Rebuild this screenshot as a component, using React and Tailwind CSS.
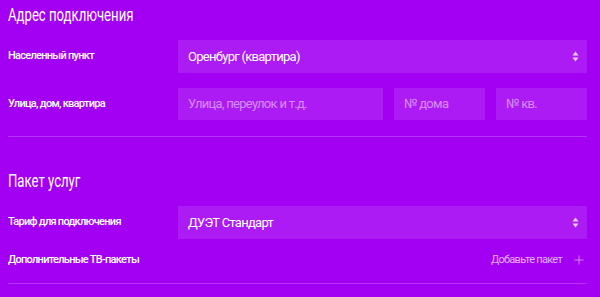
import { Plus } from "lucide-react";

function SelectBox({ value }) {
  return (
    <div className="flex h-[33px] flex-1 items-center justify-between bg-white/10 pl-[10px] pr-[8px] text-[13px] text-white">
      <span>{value}</span>
      <svg width="7" height="11" viewBox="0 0 7 11" className="fill-white/80">
        <path d="M3.5 0.5 L6.5 4.5 H0.5 Z" />
        <path d="M3.5 10.5 L6.5 6.5 H0.5 Z" />
      </svg>
    </div>
  );
}

function Field({ placeholder, className }) {
  return (
    <div
      className={`flex h-[32px] items-center bg-white/10 pl-[10px] text-[13px] text-white/50 ${className}`}
    >
      {placeholder}
    </div>
  );
}

function Row({ label, children, className = "" }) {
  return (
    <div className={`flex items-center ${className}`}>
      <div className="w-[170px] shrink-0 text-[11px] font-medium text-white">{label}</div>
      <div className="flex flex-1 gap-[11px]">{children}</div>
    </div>
  );
}

function Heading({ children, className = "" }) {
  return (
    <h2 className={`text-[18px] leading-[24px] tracking-normal text-white ${className}`}>
      <span className="inline-block origin-left scale-x-[0.73]">{children}</span>
    </h2>
  );
}

export default function App() {
  return (
    <div
      className="h-[297px] w-[600px] overflow-hidden bg-[#a300f3] pl-[8px] pr-[13px] tracking-[-0.045em]"
      style={{ fontFamily: "Roboto, 'Noto Sans', sans-serif" }}
    >
      {/* Адрес */}
      <Heading className="pt-[3px]">Адрес подключения</Heading>
      <Row label="Населенный пункт" className="mt-[13px]">
        <SelectBox value="Оренбург (квартира)" />
      </Row>
      <Row label="Улица, дом, квартира" className="mt-[15px]">
        <Field placeholder="Улица, переулок и т.д." className="w-[205px]" />
        <Field placeholder="№ дома" className="w-[91px]" />
        <Field placeholder="№ кв." className="flex-1" />
      </Row>
      <div className="mt-[16px] h-px bg-white/20" />

      {/* Пакет */}
      <Heading className="mt-[32px]">Пакет услуг</Heading>
      <Row label="Тариф для подключения" className="mt-[13px]">
        <SelectBox value="ДУЭТ Стандарт" />
      </Row>
      <div className="mt-[13px] flex items-center justify-between">
        <span className="text-[11px] font-medium text-white">Дополнительные ТВ-пакеты</span>
        <span className="flex items-center gap-[10px] text-[11px] text-white/70">
          Добавьте пакет
          <Plus size={14} strokeWidth={1.2} className="mr-[1px] text-white/70" />
        </span>
      </div>
      <div className="mt-[14px] h-px bg-white/20" />
    </div>
  );
}
